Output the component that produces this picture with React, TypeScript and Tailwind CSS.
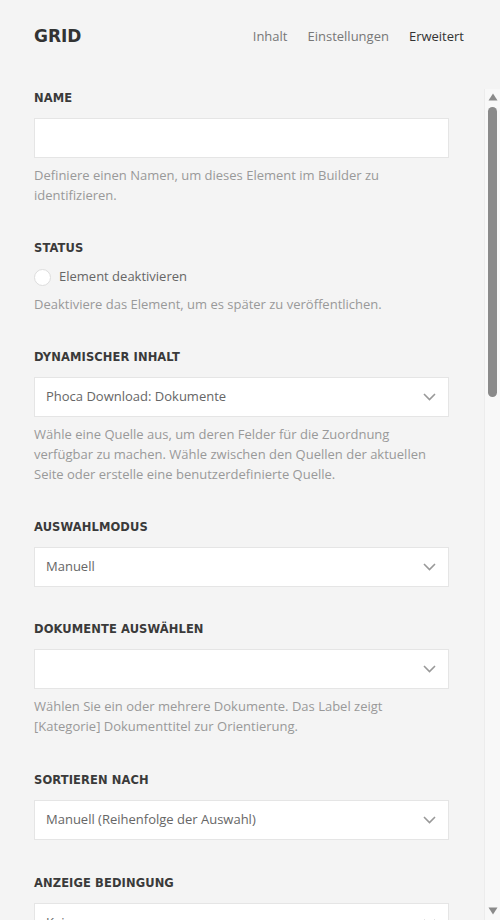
import React from "react";

const labelCls =
  "block text-[11.5px] leading-[15px] font-bold uppercase text-[#3a3a3a] tracking-[0.1px] [font-family:'DejaVu_Sans',sans-serif]";
const helpCls = "mt-[7px] text-[13px] leading-[20px] text-[#999]";

function Chevron() {
  return (
    <svg width="13" height="8" viewBox="0 0 13 8" fill="none" className="shrink-0">
      <path d="M1 1l5.5 5.5L12 1" stroke="#999" strokeWidth="1.6" />
    </svg>
  );
}

function Select({ value }: { value: string }) {
  return (
    <div className="flex h-[40px] items-center justify-between border border-[#e5e5e5] bg-white pl-[11px] pr-[12px]">
      <span className="text-[13px] text-[#666]">{value}</span>
      <Chevron />
    </div>
  );
}

export default function App() {
  return (
    <div className="flex h-[920px] w-[500px] flex-col overflow-hidden bg-[#f4f4f4] [font-family:'Open_Sans',sans-serif]">
      <div className="flex h-[89px] shrink-0 items-start justify-between pl-[34px] pr-[36px] pt-[25px]">
        <div className="text-[17px] leading-[22px] font-bold text-[#333] [font-family:'DejaVu_Sans',sans-serif]">
          GRID
        </div>
        <div className="flex gap-[20px] text-[13px] leading-[22px]">
          <span className="text-[#777]">Inhalt</span>
          <span className="text-[#777]">Einstellungen</span>
          <span className="text-[#333]">Erweitert</span>
        </div>
      </div>
      <div className="flex min-h-0 flex-1">
        <div className="min-w-0 flex-1 pl-[34px] pr-[35px] pt-[1.5px]">
          <section>
            <span className={labelCls}>Name</span>
            <div className="mt-[12px] h-[40px] border border-[#e5e5e5] bg-white" />
            <p className={helpCls}>
              Definiere einen Namen, um dieses Element im Builder zu identifizieren.
            </p>
          </section>
          <section className="mt-[36.5px]">
            <span className={labelCls}>Status</span>
            <div className="mt-[12.5px] flex h-[17px] items-center gap-[8px]">
              <span className="h-[17px] w-[17px] rounded-full border border-[#ddd] bg-white" />
              <span className="text-[13px] text-[#666]">Element deaktivieren</span>
            </div>
            <p className="mt-[8.5px] text-[13px] leading-[20px] text-[#999]">
              Deaktiviere das Element, um es später zu veröffentlichen.
            </p>
          </section>
          <section className="mt-[36px]">
            <span className={labelCls}>Dynamischer Inhalt</span>
            <div className="mt-[12px]">
              <Select value="Phoca Download: Dokumente" />
            </div>
            <p className={helpCls}>
              Wähle eine Quelle aus, um deren Felder für die Zuordnung verfügbar zu machen. Wähle
              zwischen den Quellen der aktuellen Seite oder erstelle eine benutzerdefinierte Quelle.
            </p>
          </section>
          <section className="mt-[36px]">
            <span className={labelCls}>Auswahlmodus</span>
            <div className="mt-[12px]">
              <Select value="Manuell" />
            </div>
          </section>
          <section className="mt-[35px]">
            <span className={labelCls}>Dokumente auswählen</span>
            <div className="mt-[12px]">
              <Select value="" />
            </div>
            <p className={helpCls}>
              Wählen Sie ein oder mehrere Dokumente. Das Label zeigt [Kategorie] Dokumenttitel zur
              Orientierung.
            </p>
          </section>
          <section className="mt-[36.5px]">
            <span className={labelCls}>Sortieren nach</span>
            <div className="mt-[12px]">
              <Select value="Manuell (Reihenfolge der Auswahl)" />
            </div>
          </section>
          <section className="mt-[36px]">
            <span className={labelCls}>Anzeige Bedingung</span>
            <div className="mt-[12px]">
              <Select value="Keine" />
            </div>
          </section>
        </div>
        <div className="flex w-[16px] shrink-0 flex-col items-center border-l border-[#ececec] bg-[#f8f8f8]">
          <svg width="10" height="8" viewBox="0 0 10 8" className="mt-[4px]">
            <path d="M5 0.5L9.5 7.5H0.5z" fill="#8a8a8a" />
          </svg>
          <div className="mt-[6px] h-[290px] w-[9px] rounded-full bg-[#8a8a8a]" />
          <div className="flex-1" />
          <svg width="10" height="8" viewBox="0 0 10 8" className="mb-[5px]">
            <path d="M0.5 0.5H9.5L5 7.5z" fill="#8a8a8a" />
          </svg>
        </div>
      </div>
    </div>
  );
}
